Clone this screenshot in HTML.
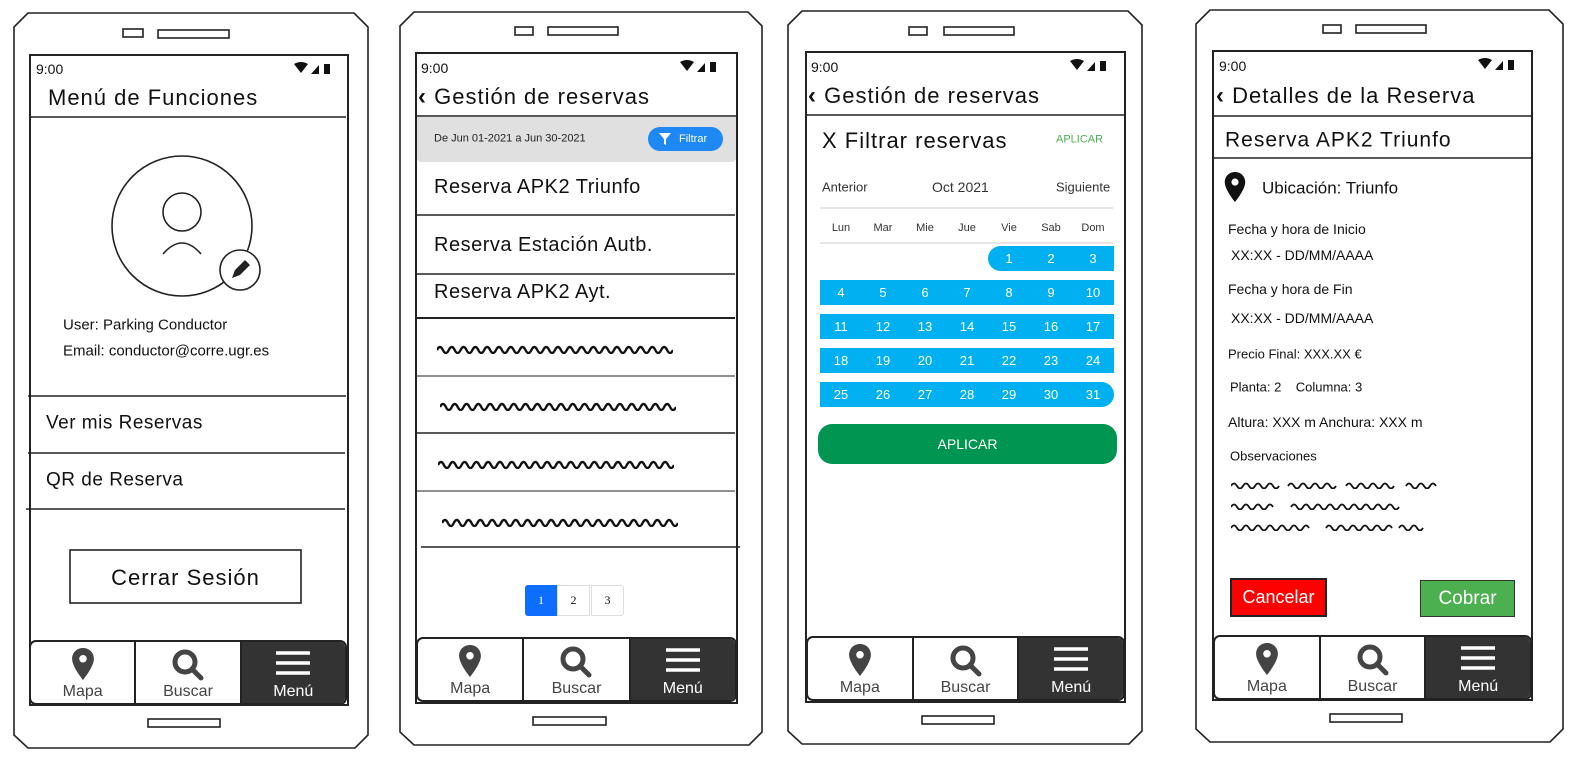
<!DOCTYPE html>
<html><head><meta charset="utf-8">
<style>
*{margin:0;padding:0;box-sizing:border-box}
body{width:1589px;height:770px;background:#fff;position:relative;overflow:hidden;font-family:"Liberation Sans",sans-serif;color:#111}
.t{position:absolute;white-space:nowrap;line-height:1;transform:translateY(-50%)}
.h{font-size:22px;letter-spacing:1px;color:#111}
.h b{font-weight:bold;font-size:24px}
.m{font-size:18px;letter-spacing:.5px}
.s{font-size:14px}
.sb{position:absolute;font-size:14px;line-height:1}
.cal{position:absolute;background:#00b0f0;color:#fff;font-size:13px;display:flex;height:25px;align-items:center}
.cal span{width:42px;text-align:center}
.nav{position:absolute;height:65px;border:2px solid #222;border-radius:7px;display:flex;overflow:hidden;background:#fff}
.nav div{flex:1;position:relative;border-right:2px solid #222}
.nav div:last-child{background:#333;border-right:none;color:#fff}
.nav svg{position:absolute;left:50%;top:6px;transform:translateX(-50%)}
.nav span{position:absolute;left:0;right:0;bottom:2px;text-align:center;font-size:16px;color:#444}
.nav div:last-child span{color:#fff}
svg.sq{position:absolute}
</style></head><body>
<svg width="1589" height="770" style="position:absolute;left:0;top:0" fill="none" stroke="#222" stroke-width="1.6">
<polygon points="28,13 354,13 368,27 368,735 355,748 28,748 14,735 14,27"/>
<polygon points="414,12 748,12 762,26 762,732 749,745 414,745 400,732 400,26"/>
<polygon points="802,11 1128,11 1142,25 1142,731 1129,744 802,744 788,731 788,25"/>
<polygon points="1210,10 1549,10 1563,24 1563,729 1550,742 1210,742 1196,729 1196,24"/>
<rect x="30" y="55" width="318" height="650" stroke-width="2"/>
<rect x="416" y="53" width="321" height="650" stroke-width="2"/>
<rect x="806" y="52" width="319" height="650" stroke-width="2"/>
<rect x="1213" y="51" width="319" height="649" stroke-width="2"/>
<rect x="123" y="29" width="20" height="8"/><rect x="158" y="30" width="71" height="8"/>
<rect x="515" y="27" width="18" height="8"/><rect x="548" y="27" width="70" height="8"/>
<rect x="909" y="27" width="18" height="8"/><rect x="944" y="27" width="70" height="8"/>
<rect x="1323" y="25" width="18" height="8"/><rect x="1356" y="25" width="70" height="8"/>
<rect x="148" y="719" width="72" height="8"/>
<rect x="533" y="717" width="73" height="8"/>
<rect x="922" y="716" width="72" height="8"/>
<rect x="1330" y="714" width="72" height="8"/>
<line x1="29" y1="117" x2="346" y2="117"/>
<line x1="28" y1="396" x2="346" y2="396"/>
<line x1="28" y1="453" x2="345" y2="453"/>
<line x1="26" y1="509" x2="345" y2="509"/>
<circle cx="182" cy="226" r="70"/>
<circle cx="182" cy="212" r="19"/>
<path d="M163 254 Q182 232 201 254"/>
<circle cx="240" cy="270" r="20" fill="#fff"/>
<path d="M232 278 l3 -8 l10 -10 l5 5 l-10 10 z" fill="#222" stroke="none"/>
<rect x="70" y="550" width="231" height="53"/>
<line x1="416" y1="116" x2="737" y2="116"/>
<line x1="417" y1="215" x2="735" y2="215"/>
<line x1="417" y1="274" x2="735" y2="274"/>
<line x1="417" y1="318" x2="735" y2="318" stroke-width="2"/>
<line x1="417" y1="376" x2="735" y2="376" stroke-width="1"/>
<line x1="417" y1="433" x2="735" y2="433"/>
<line x1="417" y1="491" x2="735" y2="491" stroke-width="1"/>
<line x1="421" y1="547" x2="740" y2="547"/>
<line x1="416" y1="162" x2="416" y2="547"/>
<line x1="806" y1="115" x2="1125" y2="115"/>
<line x1="820" y1="208" x2="1113" y2="208" stroke="#ddd"/>
<line x1="820" y1="243" x2="1113" y2="243" stroke="#ddd"/>
<line x1="1213" y1="116" x2="1532" y2="116"/>
<line x1="1213" y1="158" x2="1532" y2="158"/>
</svg>

<div class="sb" style="left:36px;top:62px">9:00</div>
<div class="sb" style="left:421px;top:61px">9:00</div>
<div class="sb" style="left:811px;top:60px">9:00</div>
<div class="sb" style="left:1219px;top:59px">9:00</div>
<svg width="50" height="14" style="position:absolute;left:294px;top:62px"><path d="M0 2 Q7 -2 14 2 L7 11Z M17 12 L25 3 V12Z M30 2 h6 v10 h-6z" fill="#111"/></svg>
<svg width="50" height="14" style="position:absolute;left:680px;top:60px"><path d="M0 2 Q7 -2 14 2 L7 11Z M17 12 L25 3 V12Z M30 2 h6 v10 h-6z" fill="#111"/></svg>
<svg width="50" height="14" style="position:absolute;left:1070px;top:59px"><path d="M0 2 Q7 -2 14 2 L7 11Z M17 12 L25 3 V12Z M30 2 h6 v10 h-6z" fill="#111"/></svg>
<svg width="50" height="14" style="position:absolute;left:1478px;top:58px"><path d="M0 2 Q7 -2 14 2 L7 11Z M17 12 L25 3 V12Z M30 2 h6 v10 h-6z" fill="#111"/></svg>

<!-- PHONE 1 -->
<div class="t h" style="left:48px;top:98px">Menú de Funciones</div>
<div class="t s" style="left:63px;top:325px;font-size:15px">User: Parking Conductor</div>
<div class="t s" style="left:63px;top:351px;font-size:15px">Email: conductor@corre.ugr.es</div>
<div class="t m" style="left:46px;top:423px;font-size:19px">Ver mis Reservas</div>
<div class="t m" style="left:46px;top:480px;font-size:19px">QR de Reserva</div>
<div class="t" style="left:70px;width:231px;text-align:center;top:578px;font-size:22px;letter-spacing:1px">Cerrar Sesión</div>

<!-- PHONE 2 -->
<div class="t h" style="left:418px;top:97px"><b>‹</b> Gestión de reservas</div>
<div style="position:absolute;left:417px;top:117px;width:319px;height:45px;background:#e0e0e0;border-radius:0 0 4px 4px"></div>
<div class="t" style="left:434px;top:139px;font-size:11px;color:#222">De Jun 01-2021 a Jun 30-2021</div>
<div style="position:absolute;left:648px;top:127px;width:75px;height:24px;background:#1e88f5;border-radius:12px;color:#fff;font-size:11px;line-height:24px;padding-left:31px">Filtrar</div>
<svg width="12" height="12" style="position:absolute;left:659px;top:133px"><path d="M0 0 H12 L7 6 V12 L5 11 V6Z" fill="#fff"/></svg>
<div class="t m" style="left:434px;top:187px;font-size:20px">Reserva APK2 Triunfo</div>
<div class="t m" style="left:434px;top:245px;font-size:20px">Reserva Estación Autb.</div>
<div class="t m" style="left:434px;top:292px;font-size:20px">Reserva APK2 Ayt.</div>
<svg class="sq" style="left:437px;top:344px" width="236" height="10" viewBox="0 0 240 10" preserveAspectRatio="none"><path d="M0 6 q3 -6 6 0 t6 0 t6 0 t6 0 t6 0 t6 0 t6 0 t6 0 t6 0 t6 0 t6 0 t6 0 t6 0 t6 0 t6 0 t6 0 t6 0 t6 0 t6 0 t6 0 t6 0 t6 0 t6 0 t6 0 t6 0 t6 0 t6 0 t6 0 t6 0 t6 0 t6 0 t6 0 t6 0 t6 0 t6 0 t6 0 t6 0 t6 0 t6 0 t6 0" stroke="#111" stroke-width="2.4" fill="none"/></svg>
<svg class="sq" style="left:440px;top:401px" width="236" height="10" viewBox="0 0 240 10" preserveAspectRatio="none"><path d="M0 6 q3 -6 6 0 t6 0 t6 0 t6 0 t6 0 t6 0 t6 0 t6 0 t6 0 t6 0 t6 0 t6 0 t6 0 t6 0 t6 0 t6 0 t6 0 t6 0 t6 0 t6 0 t6 0 t6 0 t6 0 t6 0 t6 0 t6 0 t6 0 t6 0 t6 0 t6 0 t6 0 t6 0 t6 0 t6 0 t6 0 t6 0 t6 0 t6 0 t6 0 t6 0" stroke="#111" stroke-width="2.4" fill="none"/></svg>
<svg class="sq" style="left:438px;top:459px" width="236" height="10" viewBox="0 0 240 10" preserveAspectRatio="none"><path d="M0 6 q3 -6 6 0 t6 0 t6 0 t6 0 t6 0 t6 0 t6 0 t6 0 t6 0 t6 0 t6 0 t6 0 t6 0 t6 0 t6 0 t6 0 t6 0 t6 0 t6 0 t6 0 t6 0 t6 0 t6 0 t6 0 t6 0 t6 0 t6 0 t6 0 t6 0 t6 0 t6 0 t6 0 t6 0 t6 0 t6 0 t6 0 t6 0 t6 0 t6 0 t6 0" stroke="#111" stroke-width="2.4" fill="none"/></svg>
<svg class="sq" style="left:442px;top:517px" width="236" height="10" viewBox="0 0 240 10" preserveAspectRatio="none"><path d="M0 6 q3 -6 6 0 t6 0 t6 0 t6 0 t6 0 t6 0 t6 0 t6 0 t6 0 t6 0 t6 0 t6 0 t6 0 t6 0 t6 0 t6 0 t6 0 t6 0 t6 0 t6 0 t6 0 t6 0 t6 0 t6 0 t6 0 t6 0 t6 0 t6 0 t6 0 t6 0 t6 0 t6 0 t6 0 t6 0 t6 0 t6 0 t6 0 t6 0 t6 0 t6 0" stroke="#111" stroke-width="2.4" fill="none"/></svg>
<div style="position:absolute;left:525px;top:585px;display:flex;font-family:'Liberation Serif',serif;font-size:12px">
<div style="width:32px;height:31px;background:#0d6efd;color:#fff;text-align:center;line-height:31px;border-radius:3px 0 0 3px">1</div>
<div style="width:33px;height:31px;border:1px solid #ddd;text-align:center;line-height:29px">2</div>
<div style="width:33px;height:31px;border:1px solid #ddd;text-align:center;line-height:29px;border-radius:0 3px 3px 0;margin-left:1px">3</div>
</div>

<!-- PHONE 3 -->
<div class="t h" style="left:808px;top:96px"><b>‹</b> Gestión de reservas</div>
<div class="t h" style="left:822px;top:141px;font-size:22px">X Filtrar reservas</div>
<div class="t" style="left:1056px;top:140px;font-size:11px;color:#4caf50">APLICAR</div>
<div class="t" style="left:822px;top:187px;font-size:13px;color:#333">Anterior</div>
<div class="t" style="left:932px;top:187px;font-size:14px;color:#333">Oct 2021</div>
<div class="t" style="left:1056px;top:187px;font-size:13px;color:#333">Siguiente</div>
<div class="cal" style="left:820px;top:215px;background:none;color:#333;font-size:11px"><span>Lun</span><span>Mar</span><span>Mie</span><span>Jue</span><span>Vie</span><span>Sab</span><span>Dom</span></div>
<div class="cal" style="left:988px;top:246px;width:126px;border-radius:13px 0 0 13px;padding-left:0"><span>1</span><span>2</span><span>3</span></div>
<div class="cal" style="left:820px;top:280px;width:294px"><span>4</span><span>5</span><span>6</span><span>7</span><span>8</span><span>9</span><span>10</span></div>
<div class="cal" style="left:820px;top:314px;width:294px"><span>11</span><span>12</span><span>13</span><span>14</span><span>15</span><span>16</span><span>17</span></div>
<div class="cal" style="left:820px;top:348px;width:294px"><span>18</span><span>19</span><span>20</span><span>21</span><span>22</span><span>23</span><span>24</span></div>
<div class="cal" style="left:820px;top:382px;width:294px;border-radius:0 13px 13px 0"><span>25</span><span>26</span><span>27</span><span>28</span><span>29</span><span>30</span><span>31</span></div>
<div style="position:absolute;left:818px;top:424px;width:299px;height:40px;background:#009651;border-radius:14px;color:#fff;text-align:center;line-height:40px;font-size:14px">APLICAR</div>

<!-- PHONE 4 -->
<div class="t h" style="left:1216px;top:96px"><b>‹</b> Detalles de la Reserva</div>
<div class="t h" style="left:1225px;top:140px;font-size:21px">Reserva APK2 Triunfo</div>
<svg width="22" height="30" viewBox="4 1 16 22" style="position:absolute;left:1224px;top:172px"><path d="M12 1C7.6 1 4.5 4.3 4.5 8.5 4.5 14 12 23 12 23s7.5-9 7.5-14.5C19.5 4.3 16.4 1 12 1zm0 10a2.6 2.6 0 1 1 0-5.2 2.6 2.6 0 0 1 0 5.2z" fill="#111"/></svg>
<div class="t" style="left:1262px;top:188px;font-size:17px">Ubicación: Triunfo</div>
<div class="t" style="left:1228px;top:229px;font-size:14px">Fecha y hora de Inicio</div>
<div class="t" style="left:1231px;top:255px;font-size:14px">XX:XX - DD/MM/AAAA</div>
<div class="t" style="left:1228px;top:289px;font-size:14px">Fecha y hora de Fin</div>
<div class="t" style="left:1231px;top:318px;font-size:14px">XX:XX - DD/MM/AAAA</div>
<div class="t" style="left:1228px;top:354px;font-size:13px">Precio Final: XXX.XX €</div>
<div class="t" style="left:1230px;top:387px;font-size:13px">Planta: 2 &nbsp;&nbsp; Columna: 3</div>
<div class="t" style="left:1228px;top:422px;font-size:14px">Altura: XXX m Anchura: XXX m</div>
<div class="t" style="left:1230px;top:456px;font-size:13px">Observaciones</div>
<svg class="sq" style="left:1231px;top:481px" width="210" height="8" viewBox="0 0 210 8" preserveAspectRatio="none"><path d="M0 5 q3 -5 6 0 t6 0 t6 0 t6 0 t6 0 t6 0 t6 0 t6 0 M57 5 q3 -5 6 0 t6 0 t6 0 t6 0 t6 0 t6 0 t6 0 t6 0 M115 5 q3 -5 6 0 t6 0 t6 0 t6 0 t6 0 t6 0 t6 0 t6 0 M175 5 q3 -5 6 0 t6 0 t6 0 t6 0 t6 0" stroke="#111" stroke-width="1.8" fill="none"/></svg>
<svg class="sq" style="left:1231px;top:502px" width="180" height="8" viewBox="0 0 180 8" preserveAspectRatio="none"><path d="M0 5 q3 -5 6 0 t6 0 t6 0 t6 0 t6 0 t6 0 t6 0 M60 5 q3 -5 6 0 t6 0 t6 0 t6 0 t6 0 t6 0 t6 0 t6 0 t6 0 t6 0 t6 0 t6 0 t6 0 t6 0 t6 0 t6 0 t6 0 t6 0" stroke="#111" stroke-width="1.8" fill="none"/></svg>
<svg class="sq" style="left:1231px;top:523px" width="196" height="8" viewBox="0 0 196 8" preserveAspectRatio="none"><path d="M0 5 q3 -5 6 0 t6 0 t6 0 t6 0 t6 0 t6 0 t6 0 t6 0 t6 0 t6 0 t6 0 t6 0 t6 0 M95 5 q3 -5 6 0 t6 0 t6 0 t6 0 t6 0 t6 0 t6 0 t6 0 t6 0 t6 0 t6 0 M168 5 q3 -5 6 0 t6 0 t6 0 t6 0" stroke="#111" stroke-width="1.8" fill="none"/></svg>
<div style="position:absolute;left:1230px;top:578px;width:97px;height:39px;background:#f00;border:2px solid #222;color:#fff;text-align:center;line-height:35px;font-size:18px">Cancelar</div>
<div style="position:absolute;left:1420px;top:580px;width:95px;height:37px;background:#4caf50;border:1px solid #333;color:#fff;text-align:center;line-height:35px;font-size:19px">Cobrar</div>

<!-- NAVS -->
<div class="nav" style="left:29px;top:640px;width:318px">
<div><svg width="24" height="32" viewBox="4 1 16 22"><path d="M12 1C7.6 1 4.5 4.3 4.5 8.5 4.5 14 12 23 12 23s7.5-9 7.5-14.5C19.5 4.3 16.4 1 12 1zm0 10a2.6 2.6 0 1 1 0-5.2 2.6 2.6 0 0 1 0 5.2z" fill="#444"/></svg><span>Mapa</span></div>
<div><svg width="34" height="34" viewBox="0 0 34 34"><circle cx="14" cy="14" r="10" stroke="#444" stroke-width="5" fill="none"/><path d="M21 21 L30 30" stroke="#444" stroke-width="5" stroke-linecap="round"/></svg><span>Buscar</span></div>
<div><svg width="36" height="32" viewBox="0 0 36 32"><path d="M1 5H35M1 15H35M1 25H35" stroke="#fff" stroke-width="3.5"/></svg><span>Menú</span></div>
</div>
<div class="nav" style="left:416px;top:637px;width:321px">
<div><svg width="24" height="32" viewBox="4 1 16 22"><path d="M12 1C7.6 1 4.5 4.3 4.5 8.5 4.5 14 12 23 12 23s7.5-9 7.5-14.5C19.5 4.3 16.4 1 12 1zm0 10a2.6 2.6 0 1 1 0-5.2 2.6 2.6 0 0 1 0 5.2z" fill="#444"/></svg><span>Mapa</span></div>
<div><svg width="34" height="34" viewBox="0 0 34 34"><circle cx="14" cy="14" r="10" stroke="#444" stroke-width="5" fill="none"/><path d="M21 21 L30 30" stroke="#444" stroke-width="5" stroke-linecap="round"/></svg><span>Buscar</span></div>
<div><svg width="36" height="32" viewBox="0 0 36 32"><path d="M1 5H35M1 15H35M1 25H35" stroke="#fff" stroke-width="3.5"/></svg><span>Menú</span></div>
</div>
<div class="nav" style="left:806px;top:636px;width:319px">
<div><svg width="24" height="32" viewBox="4 1 16 22"><path d="M12 1C7.6 1 4.5 4.3 4.5 8.5 4.5 14 12 23 12 23s7.5-9 7.5-14.5C19.5 4.3 16.4 1 12 1zm0 10a2.6 2.6 0 1 1 0-5.2 2.6 2.6 0 0 1 0 5.2z" fill="#444"/></svg><span>Mapa</span></div>
<div><svg width="34" height="34" viewBox="0 0 34 34"><circle cx="14" cy="14" r="10" stroke="#444" stroke-width="5" fill="none"/><path d="M21 21 L30 30" stroke="#444" stroke-width="5" stroke-linecap="round"/></svg><span>Buscar</span></div>
<div><svg width="36" height="32" viewBox="0 0 36 32"><path d="M1 5H35M1 15H35M1 25H35" stroke="#fff" stroke-width="3.5"/></svg><span>Menú</span></div>
</div>
<div class="nav" style="left:1213px;top:635px;width:319px">
<div><svg width="24" height="32" viewBox="4 1 16 22"><path d="M12 1C7.6 1 4.5 4.3 4.5 8.5 4.5 14 12 23 12 23s7.5-9 7.5-14.5C19.5 4.3 16.4 1 12 1zm0 10a2.6 2.6 0 1 1 0-5.2 2.6 2.6 0 0 1 0 5.2z" fill="#444"/></svg><span>Mapa</span></div>
<div><svg width="34" height="34" viewBox="0 0 34 34"><circle cx="14" cy="14" r="10" stroke="#444" stroke-width="5" fill="none"/><path d="M21 21 L30 30" stroke="#444" stroke-width="5" stroke-linecap="round"/></svg><span>Buscar</span></div>
<div><svg width="36" height="32" viewBox="0 0 36 32"><path d="M1 5H35M1 15H35M1 25H35" stroke="#fff" stroke-width="3.5"/></svg><span>Menú</span></div>
</div>
</body></html>
